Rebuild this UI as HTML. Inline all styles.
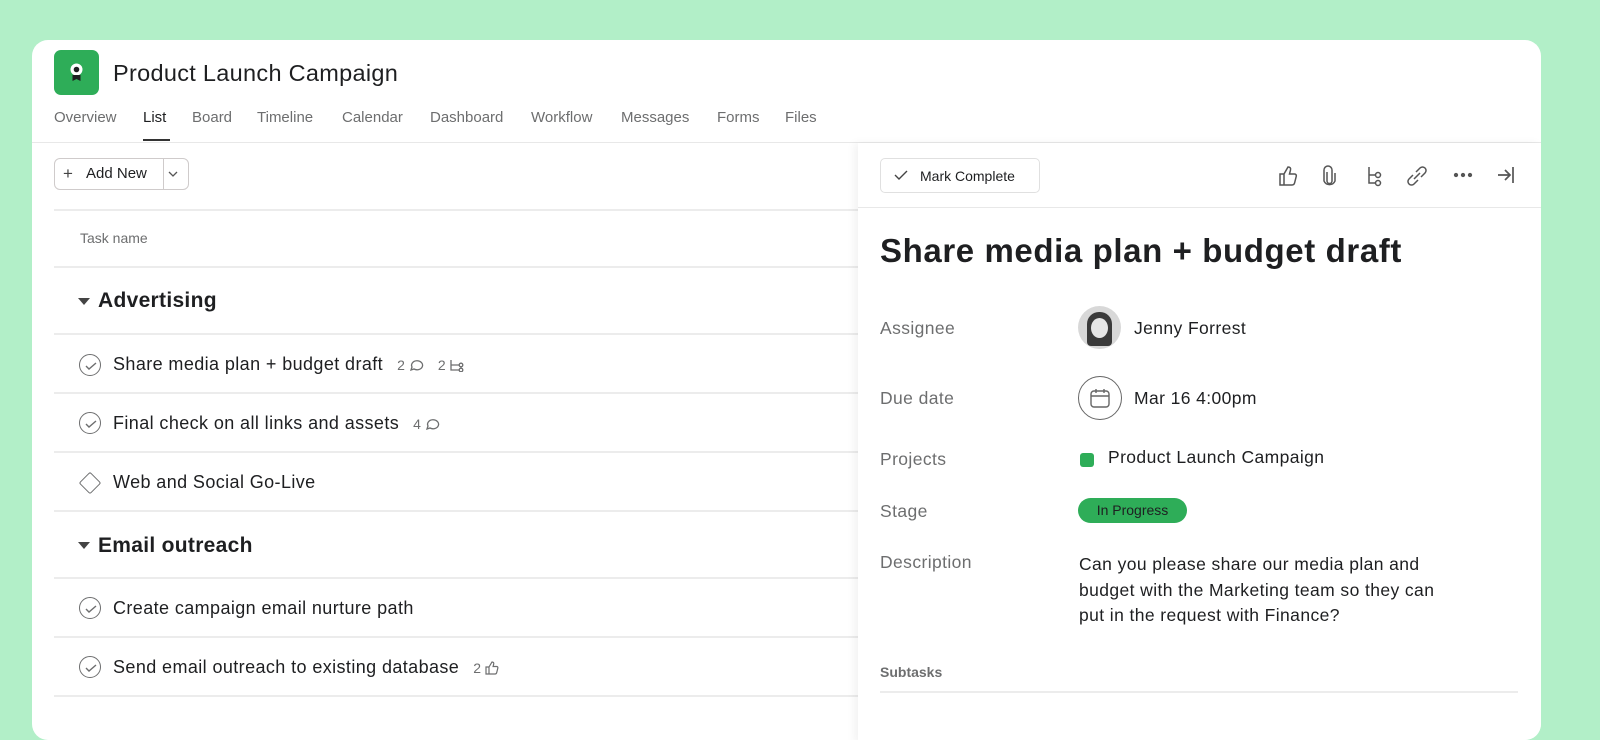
<!DOCTYPE html>
<html><head><style>
*{margin:0;padding:0;box-sizing:border-box}
body{width:1600px;height:715px;overflow:hidden;background:#b2efc8;font-family:"Liberation Sans",sans-serif;color:#1e1f21;position:relative}
.card{position:absolute;left:32px;top:40px;width:1509px;height:700px;background:#fff;border-radius:16px;overflow:hidden}
.abs{position:absolute}
.line{position:absolute;left:22px;width:804px;height:2px;background:#ececec}
.tab{position:absolute;top:69px;font-size:15px;color:#6d6e6f}
.task{position:absolute;left:81px;font-size:18px;letter-spacing:0.4px;color:#1e1f21;display:flex;align-items:center}
.chk{position:absolute;left:47px;width:22px;height:22px;border:1.5px solid #6d6e6f;border-radius:50%}
.meta{font-size:14px;color:#6d6e6f;margin-left:14px;display:inline-flex;align-items:center;gap:3px;letter-spacing:0}
.lbl{position:absolute;left:848px;font-size:17.5px;letter-spacing:0.4px;color:#6d6e6f}
.val{position:absolute;font-size:17.5px;letter-spacing:0.4px;color:#1e1f21}
</style></head><body>
<div class="card">
 <div class="abs" style="left:22px;top:10px;width:45px;height:45px;background:#2ead58;border-radius:7px">
  <svg width="45" height="45" viewBox="0 0 45 45"><circle cx="22.5" cy="19.5" r="6" fill="#fff"/><circle cx="22.5" cy="19.5" r="2.8" fill="#1e1f21"/><path d="M18.5 25 v6 l4-2 4 2 v-6z" fill="#1e1f21"/></svg>
 </div>
 <div class="abs" style="left:81px;top:20px;font-size:23.5px;letter-spacing:0.3px">Product Launch Campaign</div>
 <div class="tab" style="left:22px">Overview</div>
 <div class="tab" style="left:111px;color:#1e1f21">List</div>
 <div class="abs" style="left:111px;top:99px;width:27px;height:2px;background:#333"></div>
 <div class="tab" style="left:160px">Board</div>
 <div class="tab" style="left:225px">Timeline</div>
 <div class="tab" style="left:310px">Calendar</div>
 <div class="tab" style="left:398px">Dashboard</div>
 <div class="tab" style="left:499px">Workflow</div>
 <div class="tab" style="left:589px">Messages</div>
 <div class="tab" style="left:685px">Forms</div>
 <div class="tab" style="left:753px">Files</div>
 <div class="abs" style="left:0;top:102px;width:1509px;height:1px;background:#e8e8e8"></div>

 <div class="abs" style="left:22px;top:118px;width:135px;height:32px;border:1px solid #cfcbcb;border-radius:6px"></div>
 <div class="abs" style="left:131px;top:118px;width:1px;height:32px;background:#cfcbcb"></div>
 <div class="abs" style="left:31px;top:124px;font-size:17px;color:#444">+</div>
 <div class="abs" style="left:54px;top:125px;font-size:15px">Add New</div>
 <svg class="abs" style="left:135px;top:129px" width="12" height="10"><path d="M2 3l4 4 4-4" fill="none" stroke="#555" stroke-width="1.3"/></svg>

 <div class="line" style="top:169px"></div>
 <div class="abs" style="left:48px;top:190px;font-size:14px;color:#6d6e6f">Task name</div>
 <div class="line" style="top:226px"></div>
 <svg class="abs" style="left:45px;top:257px" width="14" height="10"><path d="M1 1h12l-6 7z" fill="#444"/></svg>
 <div class="abs" style="left:66px;top:249px;font-size:21px;font-weight:bold;letter-spacing:0.3px">Advertising</div>
 <div class="line" style="top:293px"></div>
 <div class="chk" style="top:314px"></div><svg class="abs" style="left:53px;top:322px" width="12" height="8"><path d="M1 4l3 3 7-6" fill="none" stroke="#6d6e6f" stroke-width="1.4"/></svg>
 <div class="task" style="top:314px">Share media plan + budget draft<span class="meta">2 <svg width="16" height="14" fill="none" stroke="#6d6e6f" stroke-width="1.3"><path d="M3 12l1-3a5.5 4.5 0 1 1 2 2z"/></svg></span><span class="meta">2 <svg width="16" height="14" fill="none" stroke="#6d6e6f" stroke-width="1.3"><path d="M2 2v10h8M2 7h8"/><circle cx="12" cy="7" r="1.8"/><circle cx="12" cy="12" r="1.8"/></svg></span></div>
 <div class="line" style="top:352px"></div>
 <div class="chk" style="top:372px"></div><svg class="abs" style="left:53px;top:380px" width="12" height="8"><path d="M1 4l3 3 7-6" fill="none" stroke="#6d6e6f" stroke-width="1.4"/></svg>
 <div class="task" style="top:373px">Final check on all links and assets<span class="meta">4 <svg width="16" height="14" fill="none" stroke="#6d6e6f" stroke-width="1.3"><path d="M3 12l1-3a5.5 4.5 0 1 1 2 2z"/></svg></span></div>
 <div class="line" style="top:411px"></div>
 <div class="abs" style="left:50px;top:435px;width:16px;height:16px;border:1.5px solid #6d6e6f;transform:rotate(45deg);border-radius:2px"></div>
 <div class="task" style="top:432px">Web and Social Go-Live</div>
 <div class="line" style="top:470px"></div>
 <svg class="abs" style="left:45px;top:501px" width="14" height="10"><path d="M1 1h12l-6 7z" fill="#444"/></svg>
 <div class="abs" style="left:66px;top:494px;font-size:21px;font-weight:bold;letter-spacing:0.3px">Email outreach</div>
 <div class="line" style="top:537px"></div>
 <div class="chk" style="top:557px"></div><svg class="abs" style="left:53px;top:565px" width="12" height="8"><path d="M1 4l3 3 7-6" fill="none" stroke="#6d6e6f" stroke-width="1.4"/></svg>
 <div class="task" style="top:558px">Create campaign email nurture path</div>
 <div class="line" style="top:596px"></div>
 <div class="chk" style="top:616px"></div><svg class="abs" style="left:53px;top:624px" width="12" height="8"><path d="M1 4l3 3 7-6" fill="none" stroke="#6d6e6f" stroke-width="1.4"/></svg>
 <div class="task" style="top:617px">Send email outreach to existing database<span class="meta">2 <svg width="16" height="14" fill="none" stroke="#6d6e6f" stroke-width="1.2"><path d="M2 6h3v7H2zM5 6l3-5c1.5 0 2 1 1.7 2l-.6 2.5h3.5c1 0 1.5.7 1.2 1.7l-1 4c-.2 1-.8 1.8-1.8 1.8H5"/></svg></span></div>
 <div class="line" style="top:655px"></div>

 <!-- right panel -->
 <div class="abs" style="left:826px;top:103px;width:683px;height:600px;background:#fff;box-shadow:-4px 0 8px rgba(0,0,0,0.05)"></div>
 <div class="abs" style="left:848px;top:118px;width:160px;height:35px;border:1px solid #e0e0e0;border-radius:5px"></div>
 <svg class="abs" style="left:862px;top:130px" width="14" height="11"><path d="M1 5l4 4 8-8" fill="none" stroke="#444" stroke-width="1.4"/></svg>
 <div class="abs" style="left:888px;top:128px;font-size:14px">Mark Complete</div>
 <svg class="abs" style="left:1240px;top:120px" width="250" height="32" fill="none" stroke="#555" stroke-width="1.5">
  <path d="M8 14h4v11H8zM12 14l4-7c2 0 3 1 2.5 3l-1 4h5c1.5 0 2 1 1.7 2.5l-1.5 6c-.3 1.5-1 2.5-2.7 2.5H12"/>
  <path d="M55 12v9a2.5 2.5 0 0 0 5 0v-11a4 4 0 0 0-8 0v11a6 6 0 0 0 11 0v-8"/>
  <path d="M97 7v16h6M97 15h6"/><circle cx="106" cy="15" r="2.5"/><circle cx="106" cy="23" r="2.5"/>
  <path d="M141 15l-4 4a3.5 3.5 0 0 0 5 5l4-4M149 17l4-4a3.5 3.5 0 0 0-5-5l-4 4M142 19l6-6"/>
  <circle cx="184" cy="15" r="1.4" fill="#555"/><circle cx="191" cy="15" r="1.4" fill="#555"/><circle cx="198" cy="15" r="1.4" fill="#555"/>
  <path d="M238 15h-12M233 10l5 5-5 5M241 7v16" stroke-width="1.7"/>
 </svg>
 <div class="abs" style="left:826px;top:167px;width:683px;height:1px;background:#e8e8e8"></div>
 <div class="abs" style="left:848px;top:192px;font-size:33px;font-weight:bold;letter-spacing:0.6px;color:#1e1f21">Share media plan + budget draft</div>

 <div class="lbl" style="top:278px">Assignee</div>
 <div class="abs" style="left:1046px;top:266px;width:43px;height:43px;border-radius:50%;background:#d8d8d8;overflow:hidden">
  <div class="abs" style="left:9px;top:6px;width:25px;height:34px;border-radius:12px 12px 4px 4px;background:#3a3a3a"></div>
  <div class="abs" style="left:13px;top:12px;width:17px;height:20px;border-radius:50%;background:#e6e6e6"></div>
 </div>
 <div class="val" style="left:1102px;top:278px">Jenny Forrest</div>
 <div class="lbl" style="top:348px">Due date</div>
 <div class="abs" style="left:1046px;top:336px;width:44px;height:44px;border-radius:50%;border:1.5px solid #666"></div>
 <svg class="abs" style="left:1057px;top:347px" width="22" height="22" fill="none" stroke="#666" stroke-width="1.4"><rect x="2" y="4" width="18" height="16" rx="3"/><path d="M2 9h18M7 2v4M15 2v4"/></svg>
 <div class="val" style="left:1102px;top:348px">Mar 16 4:00pm</div>
 <div class="lbl" style="top:409px">Projects</div>
 <div class="abs" style="left:1048px;top:413px;width:14px;height:14px;border-radius:3px;background:#2ead58"></div>
 <div class="val" style="left:1076px;top:407px">Product Launch Campaign</div>
 <div class="lbl" style="top:461px">Stage</div>
 <div class="abs" style="left:1046px;top:458px;width:109px;height:25px;border-radius:13px;background:#2ead58;font-size:14px;line-height:25px;text-align:center;color:#1e1f21">In Progress</div>
 <div class="lbl" style="top:512px">Description</div>
 <div class="val" style="left:1047px;top:512px;line-height:25.5px;width:378px">Can you please share our media plan and budget with the Marketing team so they can put in the request with Finance?</div>
 <div class="abs" style="left:848px;top:624px;font-size:14px;font-weight:bold;color:#6d6e6f">Subtasks</div>
 <div class="abs" style="left:848px;top:651px;width:638px;height:2px;background:#ececec"></div>
</div>
</body></html>
